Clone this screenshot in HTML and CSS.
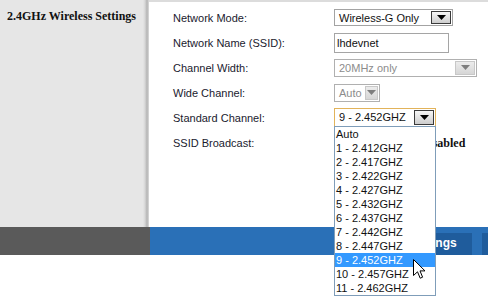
FILE: index.html
```html
<!DOCTYPE html>
<html>
<head>
<meta charset="utf-8">
<link rel="stylesheet" href="styles.css">
</head>
<body>
<div class="top">
  <aside class="side">
    <h2 class="side-title">2.4GHz Wireless Settings</h2>
  </aside>
  <main class="content">
    <div class="row">
      <span class="label">Network Mode:</span>
      <div class="select w-mode">
        <span class="sel-text">Wireless-G Only</span>
        <span class="arrow"><svg width="9" height="5" viewBox="0 0 9 5"><path d="M0 0H9L4.5 5Z"/></svg></span>
      </div>
    </div>
    <div class="row">
      <span class="label">Network Name (SSID):</span>
      <div class="textbox">lhdevnet</div>
    </div>
    <div class="row">
      <span class="label">Channel Width:</span>
      <div class="select disabled w-width">
        <span class="sel-text">20MHz only</span>
        <span class="arrow"><svg width="9" height="5" viewBox="0 0 9 5"><path d="M0 0H9L4.5 5Z"/></svg></span>
      </div>
    </div>
    <div class="row">
      <span class="label">Wide Channel:</span>
      <div class="select disabled w-wide">
        <span class="sel-text">Auto</span>
        <span class="arrow narrow"><svg width="9" height="5" viewBox="0 0 9 5"><path d="M0 0H9L4.5 5Z"/></svg></span>
      </div>
    </div>
    <div class="row">
      <span class="label">Standard Channel:</span>
      <div class="select focused w-std">
        <span class="sel-text">9 - 2.452GHZ</span>
        <span class="arrow"><svg width="9" height="5" viewBox="0 0 9 5"><path d="M0 0H9L4.5 5Z"/></svg></span>
        <ul class="dropdown">
          <li>Auto</li>
          <li>1 - 2.412GHZ</li>
          <li>2 - 2.417GHZ</li>
          <li>3 - 2.422GHZ</li>
          <li>4 - 2.427GHZ</li>
          <li>5 - 2.432GHZ</li>
          <li>6 - 2.437GHZ</li>
          <li>7 - 2.442GHZ</li>
          <li>8 - 2.447GHZ</li>
          <li class="hl">9 - 2.452GHZ</li>
          <li>10 - 2.457GHZ</li>
          <li>11 - 2.462GHZ</li>
        </ul>
      </div>
    </div>
    <div class="row">
      <span class="label">SSID Broadcast:</span>
      <div class="radios">
        <span class="radio on"></span><span class="radio-label">Enabled</span>
        <span class="radio gap"></span><span class="radio-label">Disabled</span>
      </div>
    </div>
  </main>
</div>
<footer class="footer">
  <div class="footer-left"></div>
  <div class="footer-right">
    <span class="btn">Save Settings</span>
    <span class="btn">Cancel Changes</span>
  </div>
</footer>
<svg class="cursor" width="13" height="21" viewBox="0 0 13 21"><path d="M0.5 0.5V16.5L4.5 12.8L7.2 19.2L9.6 18.2L7 11.9H12Z" fill="#fff" stroke="#000" stroke-width="1" stroke-linejoin="miter"/></svg>
</body>
</html>
```
FILE: styles.css
```css
* { box-sizing: border-box; }
html, body { margin: 0; padding: 0; background: #fff; }
body {
  width: 488px;
  height: 303px;
  overflow: hidden;
  position: relative;
  font-family: "Liberation Sans", Arial, sans-serif;
  color: #1a1a2a;
}
.top { display: flex; height: 227px; }
.side {
  width: 149px;
  flex: none;
  padding: 8px 0 0 7px;
  background: linear-gradient(to right, #e6e6e6 0, #e6e6e6 143px, #d6d6d6 145px, #b4b4b4 147px, #c6c6c6 148px, #dedede 149px);
}
.side-title {
  margin: 0;
  font: bold 12px/16px "Liberation Serif", "Times New Roman", serif;
  color: #111;
  white-space: nowrap;
}
.content {
  flex: 1;
  border-top: 2px solid #dcdcdc;
  padding: 3px 0 0 24px;
}
.row { display: flex; align-items: center; height: 25px; }
.label { width: 161px; flex: none; font-size: 11px; color: #1a1a2e; white-space: nowrap; }
.select {
  position: relative;
  display: flex;
  align-items: stretch;
  height: 17px;
  border: 1px solid #a3a3a3;
  background: #fff;
  font-size: 11px;
  color: #111;
  padding: 1px 1px 1px 0;
}
.sel-text { flex: 1; padding-left: 4px; line-height: 14px; white-space: nowrap; }
.arrow {
  width: 20px;
  flex: none;
  display: flex;
  align-items: center;
  justify-content: center;
  border: 1px solid #3a3a3a;
  background: linear-gradient(#f6f6f6, #cdcdcd);
}
.arrow svg { fill: #000; }
.arrow.narrow { width: 13px; }
.w-mode { width: 119px; }
.w-width { width: 143px; height: 18px; }
.w-wide { width: 46px; height: 18px; }
.w-std { width: 102px; height: 19px; border-color: #e2b35a; }
.w-std .sel-text { line-height: 15px; }
.disabled { border-color: #b0b0b0; color: #8c8c8c; }
.disabled .arrow { border-color: #c8c8c8; background: linear-gradient(#ececec, #d6d6d6); }
.disabled .arrow svg { fill: #7e7e7e; }
.textbox {
  width: 115px;
  height: 20px;
  border: 1px solid #a5a5a5;
  font-size: 11px;
  line-height: 18px;
  padding-left: 2px;
  color: #111;
}
.dropdown {
  position: absolute;
  z-index: 5;
  left: -1px;
  top: 100%;
  width: 102px;
  margin: 0;
  padding: 0;
  list-style: none;
  background: #fff;
  border: 1px solid #7f9db9;
}
.dropdown li {
  height: 14px;
  line-height: 14px;
  font-size: 11px;
  padding-left: 1px;
  color: #111;
  white-space: nowrap;
}
.dropdown li.hl { background: #3399ff; color: #fff; }
.radios { display: flex; align-items: center; }
.radio {
  width: 13px;
  height: 13px;
  border-radius: 50%;
  border: 1px solid #7a7a7a;
  background: #fff;
  margin-right: 3px;
}
.radio.gap { margin-left: 12px; }
.radio-label { font: bold 12px/14px "Liberation Serif", "Times New Roman", serif; color: #111; }
.footer { display: flex; height: 28px; }
.footer-left { width: 150px; flex: none; background: #5a5a5a; }
.footer-right {
  flex: 1;
  display: flex;
  align-items: flex-end;
  gap: 10px;
  padding-left: 213px;
  background: #2a70b7;
  overflow: hidden;
}
.btn {
  flex: none;
  height: 22px;
  line-height: 20px;
  padding: 0 15px;
  background: #1f5c9c;
  color: #fff;
  font-weight: bold;
  font-size: 12px;
  white-space: nowrap;
}
.cursor { position: absolute; left: 413px; top: 259px; z-index: 10; }
```
